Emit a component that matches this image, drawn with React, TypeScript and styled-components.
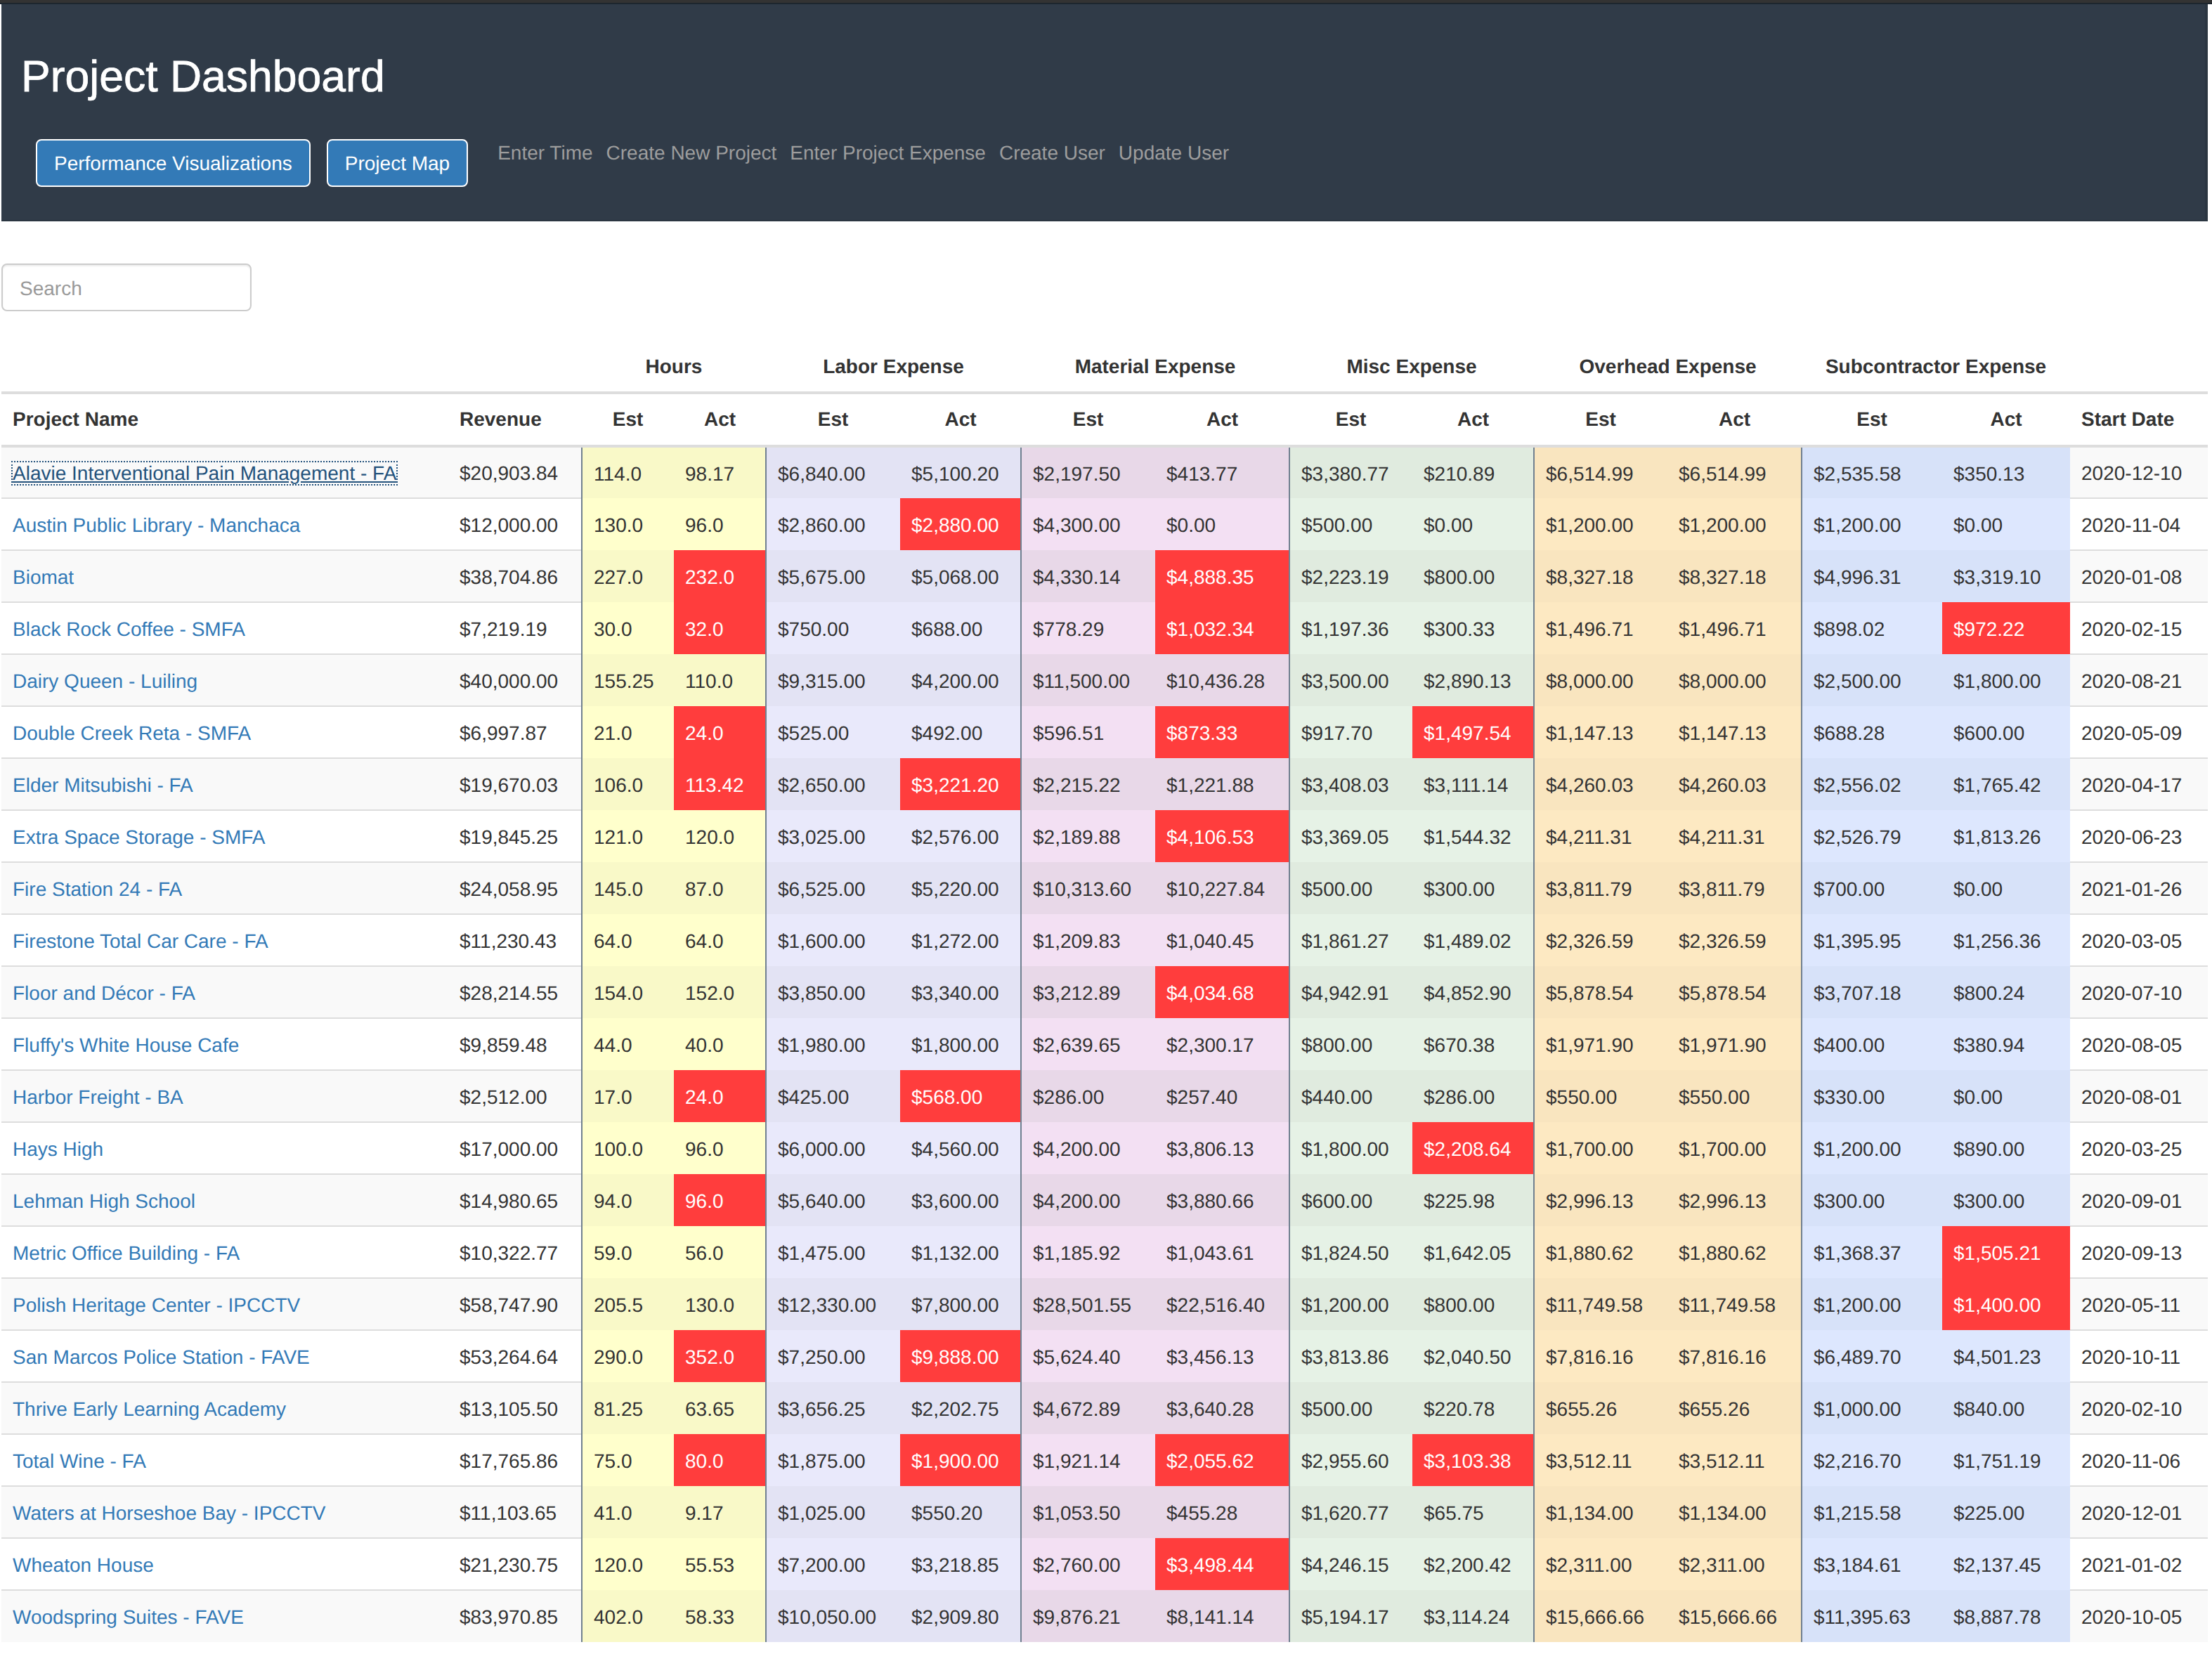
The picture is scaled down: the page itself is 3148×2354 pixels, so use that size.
import React from "react";
import styled, { createGlobalStyle } from "styled-components";

const Global = createGlobalStyle`
  html, body { margin: 0; padding: 0; background: #fff; }
  body { font-family: "Liberation Sans", Arial, sans-serif; font-size: 28px; line-height: 40px; color: #333; text-rendering: geometricPrecision; }
  * { box-sizing: border-box; }
`;

const TopStrip = styled.div`
  height: 6px;
  background: #333;
  border-bottom: 2px solid #1d262e;
`;
const Header = styled.header`
  margin: 0 6px 0 2px;
  height: 309px;
  background: #303b48;
  padding: 0 28px;
  box-shadow: inset -4px -2px 0 #2b3641;
`;
const Title = styled.h2`
  margin: 0;
  padding-top: 70px;
  font-size: 62.5px;
  line-height: 66px;
  font-weight: 400;
  color: #fff;
  -webkit-text-stroke: 0.8px #fff;
`;
const Toolbar = styled.nav`
  display: flex;
  align-items: flex-start;
  margin-top: 56px;
  padding-left: 21px;
`;
const PrimaryButton = styled.a`
  display: block;
  height: 68px;
  padding: 13px 24px 11px;
  margin-right: 23px;
  background: #337ab7;
  border: 2px solid #fff;
  border-radius: 8px;
  color: #fff;
  font-size: 28px;
  line-height: 40px;
  white-space: nowrap;
`;
const NavLink = styled.a`
  display: block;
  margin-left: 19px;
  color: #9d9d9d;
  font-size: 28px;
  line-height: 40px;
  white-space: nowrap;
  &:first-of-type { margin-left: 16px; }
`;
const SearchInput = styled.input`
  display: block;
  width: 356px;
  height: 68px;
  margin: 60px 0 0 2px;
  padding: 3px 24px 0;
  border: 2px solid #ccc;
  border-radius: 8px;
  font: 28px/40px "Liberation Sans", Arial, sans-serif;
  text-rendering: geometricPrecision;
  box-shadow: inset 0 2px 2px rgba(0, 0, 0, 0.075);
  &::placeholder { color: #999; opacity: 1; }
`;
const Table = styled.table`
  table-layout: fixed;
  width: 3140px;
  margin: 44px 0 0 2px;
  border-collapse: collapse;
`;
const GroupHead = styled.th`
  height: 72px;
  padding: 0 16px;
  font-weight: 700;
  text-align: center;
  white-space: nowrap;
  border-bottom: 4px solid #ddd;
`;
const ColHead = styled.th<{ $left?: boolean }>`
  height: 76px;
  padding: 0 16px;
  font-weight: 700;
  text-align: ${(p) => (p.$left ? "left" : "center")};
  white-space: nowrap;
  border-bottom: 4px solid #ddd;
`;
const PlainCell = styled.td<{ $odd: boolean; $first: boolean }>`
  height: 74px;
  padding: 3px 16px 0;
  white-space: nowrap;
  background: ${(p) => (p.$odd ? "#f9f9f9" : "#fff")};
  border-top: ${(p) => (p.$first ? "none" : "2px solid #ddd")};
`;
const ValueCell = styled.td<{ $bg: string; $over: boolean; $divider: boolean }>`
  height: 74px;
  padding: 3px 16px 0;
  white-space: nowrap;
  background: ${(p) => (p.$over ? "#ff3d3d" : p.$bg)};
  color: ${(p) => (p.$over ? "#fff" : "#333")};
  border-left: ${(p) => (p.$divider ? "2px solid #708090" : "none")};
`;
const ProjectLink = styled.a<{ $focused: boolean }>`
  color: ${(p) => (p.$focused ? "#23527c" : "#337ab7")};
  text-decoration: ${(p) => (p.$focused ? "underline" : "none")};
  outline: ${(p) => (p.$focused ? "2px dotted #23527c" : "none")};
`;

const widths = [636, 190, 131, 131, 191, 172, 191, 191, 175, 173, 190, 191, 200, 182, 196];
const groups = [
  { name: "Hours", even: "#ffffcc", odd: "#f9f9c8" },
  { name: "Labor Expense", even: "#e9e9fb", odd: "#e3e3f4" },
  { name: "Material Expense", even: "#f3e0f3", odd: "#e8d8e8" },
  { name: "Misc Expense", even: "#e6f2e6", odd: "#e0ebdf" },
  { name: "Overhead Expense", even: "#fde9c2", odd: "#f9e5bf" },
  { name: "Subcontractor Expense", even: "#dde7fe", odd: "#d7e2f9" },
];

const rows: string[][] = [
  ["Alavie Interventional Pain Management - FA", "$20,903.84", "114.0", "98.17", "$6,840.00", "$5,100.20", "$2,197.50", "$413.77", "$3,380.77", "$210.89", "$6,514.99", "$6,514.99", "$2,535.58", "$350.13", "2020-12-10"],
  ["Austin Public Library - Manchaca", "$12,000.00", "130.0", "96.0", "$2,860.00", "$2,880.00", "$4,300.00", "$0.00", "$500.00", "$0.00", "$1,200.00", "$1,200.00", "$1,200.00", "$0.00", "2020-11-04"],
  ["Biomat", "$38,704.86", "227.0", "232.0", "$5,675.00", "$5,068.00", "$4,330.14", "$4,888.35", "$2,223.19", "$800.00", "$8,327.18", "$8,327.18", "$4,996.31", "$3,319.10", "2020-01-08"],
  ["Black Rock Coffee - SMFA", "$7,219.19", "30.0", "32.0", "$750.00", "$688.00", "$778.29", "$1,032.34", "$1,197.36", "$300.33", "$1,496.71", "$1,496.71", "$898.02", "$972.22", "2020-02-15"],
  ["Dairy Queen - Luiling", "$40,000.00", "155.25", "110.0", "$9,315.00", "$4,200.00", "$11,500.00", "$10,436.28", "$3,500.00", "$2,890.13", "$8,000.00", "$8,000.00", "$2,500.00", "$1,800.00", "2020-08-21"],
  ["Double Creek Reta - SMFA", "$6,997.87", "21.0", "24.0", "$525.00", "$492.00", "$596.51", "$873.33", "$917.70", "$1,497.54", "$1,147.13", "$1,147.13", "$688.28", "$600.00", "2020-05-09"],
  ["Elder Mitsubishi - FA", "$19,670.03", "106.0", "113.42", "$2,650.00", "$3,221.20", "$2,215.22", "$1,221.88", "$3,408.03", "$3,111.14", "$4,260.03", "$4,260.03", "$2,556.02", "$1,765.42", "2020-04-17"],
  ["Extra Space Storage - SMFA", "$19,845.25", "121.0", "120.0", "$3,025.00", "$2,576.00", "$2,189.88", "$4,106.53", "$3,369.05", "$1,544.32", "$4,211.31", "$4,211.31", "$2,526.79", "$1,813.26", "2020-06-23"],
  ["Fire Station 24 - FA", "$24,058.95", "145.0", "87.0", "$6,525.00", "$5,220.00", "$10,313.60", "$10,227.84", "$500.00", "$300.00", "$3,811.79", "$3,811.79", "$700.00", "$0.00", "2021-01-26"],
  ["Firestone Total Car Care - FA", "$11,230.43", "64.0", "64.0", "$1,600.00", "$1,272.00", "$1,209.83", "$1,040.45", "$1,861.27", "$1,489.02", "$2,326.59", "$2,326.59", "$1,395.95", "$1,256.36", "2020-03-05"],
  ["Floor and Décor - FA", "$28,214.55", "154.0", "152.0", "$3,850.00", "$3,340.00", "$3,212.89", "$4,034.68", "$4,942.91", "$4,852.90", "$5,878.54", "$5,878.54", "$3,707.18", "$800.24", "2020-07-10"],
  ["Fluffy's White House Cafe", "$9,859.48", "44.0", "40.0", "$1,980.00", "$1,800.00", "$2,639.65", "$2,300.17", "$800.00", "$670.38", "$1,971.90", "$1,971.90", "$400.00", "$380.94", "2020-08-05"],
  ["Harbor Freight - BA", "$2,512.00", "17.0", "24.0", "$425.00", "$568.00", "$286.00", "$257.40", "$440.00", "$286.00", "$550.00", "$550.00", "$330.00", "$0.00", "2020-08-01"],
  ["Hays High", "$17,000.00", "100.0", "96.0", "$6,000.00", "$4,560.00", "$4,200.00", "$3,806.13", "$1,800.00", "$2,208.64", "$1,700.00", "$1,700.00", "$1,200.00", "$890.00", "2020-03-25"],
  ["Lehman High School", "$14,980.65", "94.0", "96.0", "$5,640.00", "$3,600.00", "$4,200.00", "$3,880.66", "$600.00", "$225.98", "$2,996.13", "$2,996.13", "$300.00", "$300.00", "2020-09-01"],
  ["Metric Office Building - FA", "$10,322.77", "59.0", "56.0", "$1,475.00", "$1,132.00", "$1,185.92", "$1,043.61", "$1,824.50", "$1,642.05", "$1,880.62", "$1,880.62", "$1,368.37", "$1,505.21", "2020-09-13"],
  ["Polish Heritage Center - IPCCTV", "$58,747.90", "205.5", "130.0", "$12,330.00", "$7,800.00", "$28,501.55", "$22,516.40", "$1,200.00", "$800.00", "$11,749.58", "$11,749.58", "$1,200.00", "$1,400.00", "2020-05-11"],
  ["San Marcos Police Station - FAVE", "$53,264.64", "290.0", "352.0", "$7,250.00", "$9,888.00", "$5,624.40", "$3,456.13", "$3,813.86", "$2,040.50", "$7,816.16", "$7,816.16", "$6,489.70", "$4,501.23", "2020-10-11"],
  ["Thrive Early Learning Academy", "$13,105.50", "81.25", "63.65", "$3,656.25", "$2,202.75", "$4,672.89", "$3,640.28", "$500.00", "$220.78", "$655.26", "$655.26", "$1,000.00", "$840.00", "2020-02-10"],
  ["Total Wine - FA", "$17,765.86", "75.0", "80.0", "$1,875.00", "$1,900.00", "$1,921.14", "$2,055.62", "$2,955.60", "$3,103.38", "$3,512.11", "$3,512.11", "$2,216.70", "$1,751.19", "2020-11-06"],
  ["Waters at Horseshoe Bay - IPCCTV", "$11,103.65", "41.0", "9.17", "$1,025.00", "$550.20", "$1,053.50", "$455.28", "$1,620.77", "$65.75", "$1,134.00", "$1,134.00", "$1,215.58", "$225.00", "2020-12-01"],
  ["Wheaton House", "$21,230.75", "120.0", "55.53", "$7,200.00", "$3,218.85", "$2,760.00", "$3,498.44", "$4,246.15", "$2,200.42", "$2,311.00", "$2,311.00", "$3,184.61", "$2,137.45", "2021-01-02"],
  ["Woodspring Suites - FAVE", "$83,970.85", "402.0", "58.33", "$10,050.00", "$2,909.80", "$9,876.21", "$8,141.14", "$5,194.17", "$3,114.24", "$15,666.66", "$15,666.66", "$11,395.63", "$8,887.78", "2020-10-05"],
];

const num = (s: string) => parseFloat(s.replace(/[$,]/g, ""));

export default function App() {
  return (
    <>
      <Global />
      <TopStrip />
      <Header>
        <Title>Project Dashboard</Title>
        <Toolbar>
          <PrimaryButton>Performance Visualizations</PrimaryButton>
          <PrimaryButton>Project Map</PrimaryButton>
          <NavLink>Enter Time</NavLink>
          <NavLink>Create New Project</NavLink>
          <NavLink>Enter Project Expense</NavLink>
          <NavLink>Create User</NavLink>
          <NavLink>Update User</NavLink>
        </Toolbar>
      </Header>
      <SearchInput placeholder="Search" />
      <Table>
        <colgroup>
          {widths.map((w, i) => (
            <col key={i} width={w} />
          ))}
        </colgroup>
        <thead>
          <tr>
            <GroupHead colSpan={2} />
            {groups.map((g) => (
              <GroupHead key={g.name} colSpan={2}>
                {g.name}
              </GroupHead>
            ))}
            <GroupHead />
          </tr>
          <tr>
            <ColHead $left>Project Name</ColHead>
            <ColHead $left>Revenue</ColHead>
            {groups.map((g) => (
              <React.Fragment key={g.name}>
                <ColHead>Est</ColHead>
                <ColHead>Act</ColHead>
              </React.Fragment>
            ))}
            <ColHead $left>Start Date</ColHead>
          </tr>
        </thead>
        <tbody>
          {rows.map((r, ri) => {
            const odd = ri % 2 === 0;
            const first = ri === 0;
            return (
              <tr key={r[0]}>
                <PlainCell $odd={odd} $first={first}>
                  <ProjectLink $focused={first}>{r[0]}</ProjectLink>
                </PlainCell>
                <PlainCell $odd={odd} $first={first}>{r[1]}</PlainCell>
                {groups.map((g, gi) => {
                  const est = r[2 + gi * 2];
                  const act = r[3 + gi * 2];
                  const bg = odd ? g.odd : g.even;
                  return (
                    <React.Fragment key={g.name}>
                      <ValueCell $bg={bg} $over={false} $divider>{est}</ValueCell>
                      <ValueCell $bg={bg} $over={num(act) > num(est)} $divider={false}>{act}</ValueCell>
                    </React.Fragment>
                  );
                })}
                <PlainCell $odd={odd} $first={first}>{r[14]}</PlainCell>
              </tr>
            );
          })}
        </tbody>
      </Table>
    </>
  );
}
